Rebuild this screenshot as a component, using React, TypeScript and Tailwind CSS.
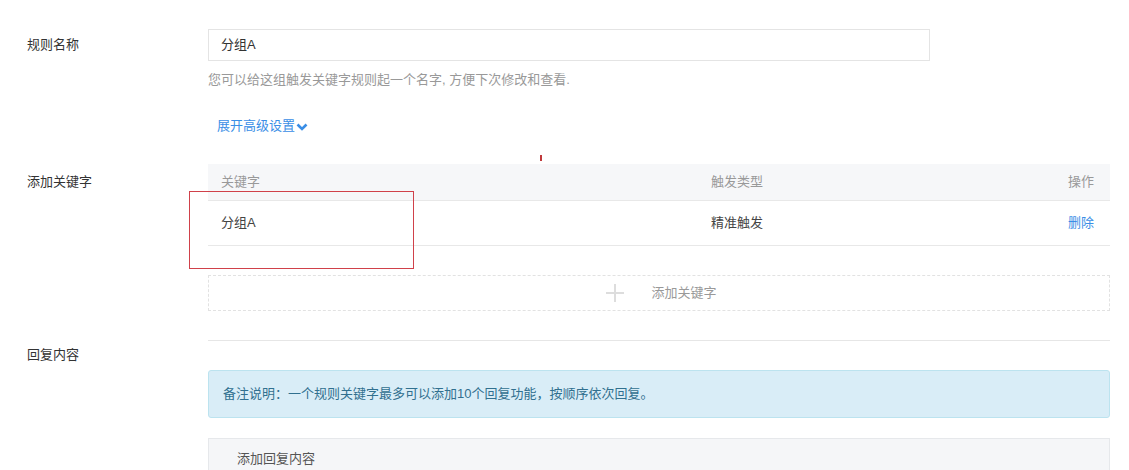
import React from 'react';

const font = { fontFamily: '"Liberation Sans", "Noto Sans CJK SC", sans-serif' };

const Label = ({ children }: { children: React.ReactNode }) => (
  <div className="w-[208px] shrink-0 pl-[27px] text-[13px] leading-[20px] text-[#333]">{children}</div>
);

export default function App() {
  return (
    <div className="relative h-[470px] w-[1129px] overflow-hidden bg-white" style={font}>
      {/* 规则名称 */}
      <div className="flex pt-[29px]">
        <div className="pt-[6px]">
          <Label>规则名称</Label>
        </div>
        <div className="flex flex-col">
          <div className="flex h-[32px] w-[722px] items-center border border-[#e4e4e4] px-[12px] text-[13px] text-[#333]">
            分组A
          </div>
          <p className="mt-[9px] text-[13px] leading-[20px] text-[#999]">您可以给这组触发关键字规则起一个名字, 方便下次修改和查看.</p>
          <button className="mt-[26px] flex items-center gap-[1px] pl-[9px] text-[13px] leading-[20px] text-[#3a8ee6]">
            展开高级设置
            <svg width="12" height="10" viewBox="0 0 12 10" className="mt-[1px]">
              <polyline points="1.5,2.5 6,7 10.5,2.5" fill="none" stroke="#3a8ee6" strokeWidth="2.6" />
            </svg>
          </button>
        </div>
      </div>

      {/* 添加关键字 */}
      <div className="mt-[28px] flex">
        <div className="pt-[8px]">
          <Label>添加关键字</Label>
        </div>
        <div className="flex w-[902px] flex-col">
          <div className="flex h-[37px] items-center border-b border-[#e8e8e8] bg-[#f6f7f9] px-[13px] text-[13px] text-[#999]">
            <div className="w-[490px]">关键字</div>
            <div className="flex-1">触发类型</div>
            <div className="pr-[3px]">操作</div>
          </div>
          <div className="flex h-[45px] items-center border-b border-[#e8e8e8] px-[13px] text-[13px] text-[#444]">
            <div className="w-[490px]">分组A</div>
            <div className="flex-1">精准触发</div>
            <div className="pr-[3px] text-[#3a8ee6]">删除</div>
          </div>
          <div className="mt-[29px] flex h-[36px] items-center justify-center border border-dashed border-[#e2e2e2] text-[13px] text-[#999]">
            <svg width="20" height="20" viewBox="0 0 20 20" className="ml-[4px] mr-[26px]">
              <path d="M10 1v18M1 10h18" stroke="#ddd" strokeWidth="2" fill="none" />
            </svg>
            <span>添加关键字</span>
          </div>
        </div>
      </div>

      {/* 回复内容 */}
      <div className="mt-[29px] flex">
        <div className="pt-[5px]">
          <Label>回复内容</Label>
        </div>
        <div className="flex w-[902px] flex-col border-t border-[#e6e6e6] pt-[29px]">
          <div className="flex h-[48px] items-center rounded-[3px] border border-[#bce3ef] bg-[#d9edf7] px-[14px] text-[13px] text-[#31708f]">
            备注说明：一个规则关键字最多可以添加10个回复功能，按顺序依次回复。
          </div>
          <div className="mt-[20px] h-[32px] border border-b-0 border-[#e6e8eb] bg-[#f5f6f8] px-[28px] pt-[10px] text-[13px] leading-[20px] text-[#555]">
            添加回复内容
          </div>
        </div>
      </div>

      {/* annotation marks */}
      <div className="pointer-events-none absolute left-[540px] top-[155px] h-[6px] w-[2px] bg-[#c0393b]" />
      <div className="pointer-events-none absolute left-[189px] top-[191px] h-[78px] w-[225px] border border-[#d0414a]" />
    </div>
  );
}
